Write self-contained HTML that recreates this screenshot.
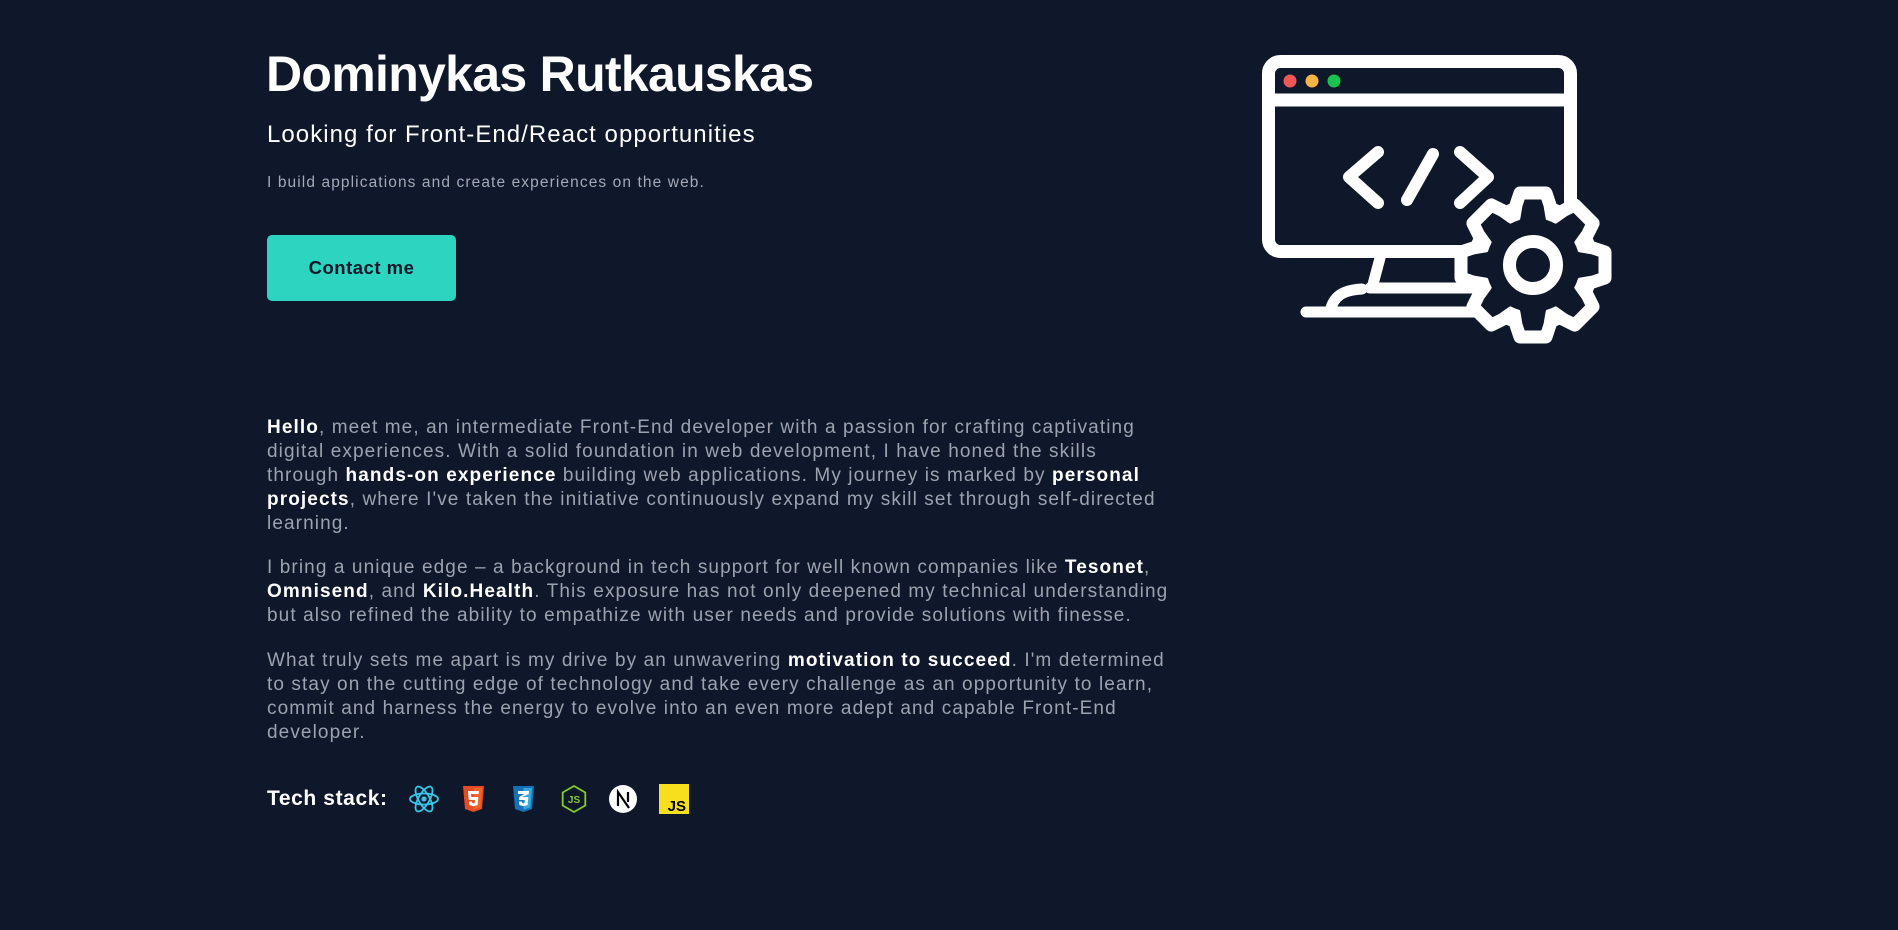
<!DOCTYPE html>
<html><head><meta charset="utf-8"><style>
html,body{margin:0;padding:0;background:#0f172a;width:1898px;height:930px;overflow:hidden;font-family:"Liberation Sans",sans-serif}
.a{position:absolute;white-space:nowrap}
h1{position:absolute;left:266px;top:45px;margin:0;font-size:50px;font-weight:bold;color:#fff;letter-spacing:-0.7px}
.sub{left:267px;top:121px;font-size:24px;color:#fff;letter-spacing:1.05px}
.small{left:267px;top:174px;font-size:15.5px;color:#a3a9b6;letter-spacing:1.1px}
.btn{position:absolute;left:267px;top:235px;width:189px;height:66px;background:#2dd4bf;border-radius:5px;color:#0f172a;font-weight:bold;font-size:18.5px;text-align:center;line-height:66px;letter-spacing:0.5px}
.p{position:absolute;left:267px;font-size:19px;line-height:24px;color:#9ca3af;letter-spacing:1.1px;white-space:nowrap}
.p b{color:#fff}
.ts{left:267px;top:787px;font-size:21px;font-weight:bold;color:#fff;letter-spacing:0.6px}
</style></head><body>
<h1>Dominykas Rutkauskas</h1>
<div class="a sub">Looking for Front-End/React opportunities</div>
<div class="a small">I build applications and create experiences on the web.</div>
<div class="btn">Contact me</div>

<div class="p" style="top:416px"><b>Hello</b>, meet me, an intermediate Front-End developer with a passion for crafting captivating<br>digital experiences. With a solid foundation in web development, I have honed the skills<br>through <b>hands-on experience</b> building web applications. My journey is marked by <b>personal<br>projects</b>, where I've taken the initiative continuously expand my skill set through self-directed<br>learning.</div>
<div class="p" style="top:556px">I bring a unique edge – a background in tech support for well known companies like <b>Tesonet</b>,<br><b>Omnisend</b>, and <b>Kilo.Health</b>. This exposure has not only deepened my technical understanding<br>but also refined the ability to empathize with user needs and provide solutions with finesse.</div>
<div class="p" style="top:649px">What truly sets me apart is my drive by an unwavering <b>motivation to succeed</b>. I'm determined<br>to stay on the cutting edge of technology and take every challenge as an opportunity to learn,<br>commit and harness the energy to evolve into an even more adept and capable Front-End<br>developer.</div>

<div class="a ts">Tech stack:</div>

<svg class="a" style="left:0;top:0" width="1898" height="930" viewBox="0 0 1898 930">
 <g fill="none" stroke="#fff" stroke-width="13" stroke-linecap="round" stroke-linejoin="round">
  <rect x="1268.5" y="61.5" width="302" height="190" rx="12"/>
  <line x1="1270" y1="100" x2="1569" y2="100" stroke-linecap="butt"/>
  <polyline points="1378,152 1349,177 1378,203" stroke-width="12"/>
  <line x1="1433" y1="154" x2="1407" y2="200" stroke-width="12"/>
  <polyline points="1460,152 1488,177 1460,203" stroke-width="12"/>
  <line x1="1380" y1="258" x2="1372" y2="288" stroke-width="11"/>
  <line x1="1370" y1="288" x2="1480" y2="288" stroke-width="11"/>
  <path d="M1330 312 C1333 296 1343 290 1362 289" stroke-width="11"/>
  <line x1="1306" y1="312" x2="1490" y2="312" stroke-width="11"/>
 </g>
 <circle cx="1290" cy="81" r="6.5" fill="#f25656"/>
 <circle cx="1312" cy="81" r="6.5" fill="#f5b544"/>
 <circle cx="1334" cy="81" r="6.5" fill="#1cc24f"/>
 <g transform="translate(1533,265)" stroke="#fff" stroke-width="13" stroke-linejoin="round" stroke-linecap="round">
  <circle r="59" fill="#0f172a"/>
  <defs><path id="tooth" d="M-19 -48 L-17 -60 L-13 -72 L13 -72 L17 -60 L19 -48"/></defs>
  <use href="#tooth" fill="#0f172a"/>
  <use href="#tooth" fill="#0f172a" transform="rotate(45)"/>
  <use href="#tooth" fill="#0f172a" transform="rotate(90)"/>
  <use href="#tooth" fill="#0f172a" transform="rotate(135)"/>
  <use href="#tooth" fill="#0f172a" transform="rotate(180)"/>
  <use href="#tooth" fill="#0f172a" transform="rotate(225)"/>
  <use href="#tooth" fill="#0f172a" transform="rotate(270)"/>
  <use href="#tooth" fill="#0f172a" transform="rotate(315)"/>
  <circle r="47" fill="#0f172a" stroke="none"/>
  <circle r="23.5" fill="none"/>
 </g>

 <g transform="translate(424,799)" fill="none" stroke="#38c6e8" stroke-width="1.8">
  <ellipse rx="14" ry="5.5"/>
  <ellipse rx="14" ry="5.5" transform="rotate(60)"/>
  <ellipse rx="14" ry="5.5" transform="rotate(120)"/>
  <circle r="2.6" fill="#38c6e8" stroke="none"/>
 </g>
 <g transform="translate(462,786)">
  <path d="M1 0 L22 0 L20 23 L11.5 26 L3 23 Z" fill="#e44d26"/>
  <path d="M11.5 2 L20 2 L18.3 21.5 L11.5 23.5 Z" fill="#f16529"/>
  <path d="M6 5 L17 5 L16.6 8 L9 8 L9.4 11 L16.3 11 L15.6 19 L11.5 20.3 L7.4 19 L7.1 15.5 L10 15.5 L10.2 17 L11.5 17.4 L12.8 17 L13 14 L6.8 14 Z" fill="#fff"/>
 </g>
 <g transform="translate(512,786)">
  <path d="M1 0 L22 0 L20 23 L11.5 26 L3 23 Z" fill="#1572b6"/>
  <path d="M11.5 2 L20 2 L18.3 21.5 L11.5 23.5 Z" fill="#33a9dc"/>
  <path d="M6 5 L17 5 L16.7 8 L10 11 L16.4 11 L15.6 19 L11.5 20.3 L7.4 19 L7.1 15.5 L10 15.5 L10.2 17 L11.5 17.4 L12.8 17 L13 14 L7 14 L7.2 11 L12.5 8 L6.2 8 Z" fill="#fff"/>
 </g>
 <g transform="translate(574,799)">
  <path d="M0 -13 L11.3 -6.5 L11.3 6.5 L0 13 L-11.3 6.5 L-11.3 -6.5 Z" fill="none" stroke="#83cd29" stroke-width="1.8"/>
  <text x="0" y="4" font-family="Liberation Sans" font-weight="bold" font-size="10" fill="#83cd29" text-anchor="middle">JS</text>
 </g>
 <g transform="translate(623,799)">
  <circle r="14" fill="#fff"/>
  <path d="M-5 7 L-5 -7 L6 9 M5 -7 L5 3" stroke="#000" stroke-width="2.2" fill="none"/>
 </g>
 <rect x="659" y="784" width="30" height="30" fill="#f7df1e"/>
 <text x="686" y="811" font-family="Liberation Sans" font-weight="bold" font-size="15" fill="#000" text-anchor="end">JS</text>
</svg>
</body></html>
